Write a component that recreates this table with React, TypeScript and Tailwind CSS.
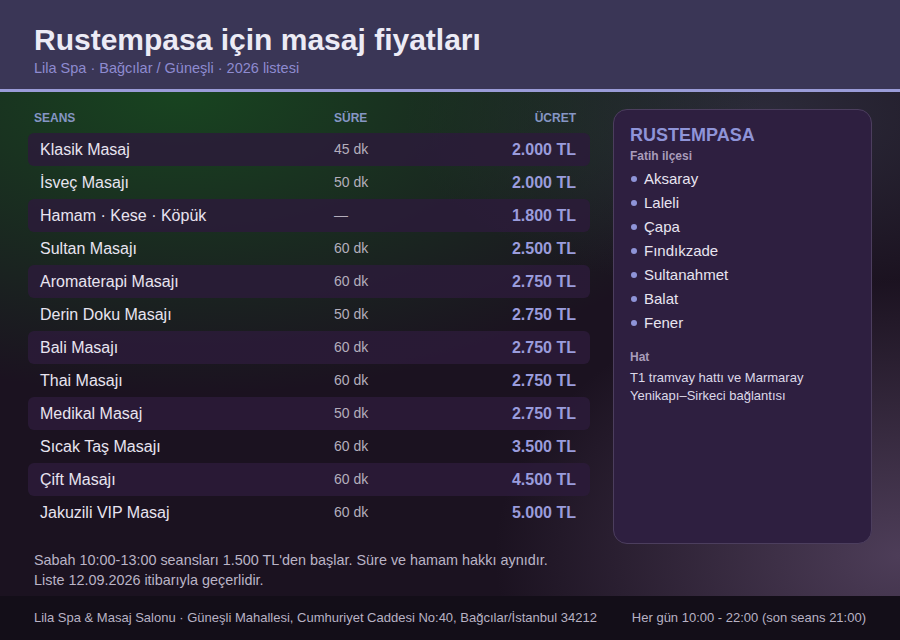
const rows: [string, string, string][] = [
  ["Klasik Masaj", "45 dk", "2.000 TL"],
  ["İsveç Masajı", "50 dk", "2.000 TL"],
  ["Hamam · Kese · Köpük", "—", "1.800 TL"],
  ["Sultan Masajı", "60 dk", "2.500 TL"],
  ["Aromaterapi Masajı", "60 dk", "2.750 TL"],
  ["Derin Doku Masajı", "50 dk", "2.750 TL"],
  ["Bali Masajı", "60 dk", "2.750 TL"],
  ["Thai Masajı", "60 dk", "2.750 TL"],
  ["Medikal Masaj", "50 dk", "2.750 TL"],
  ["Sıcak Taş Masajı", "60 dk", "3.500 TL"],
  ["Çift Masajı", "60 dk", "4.500 TL"],
  ["Jakuzili VIP Masaj", "60 dk", "5.000 TL"],
];

const areas = ["Aksaray", "Laleli", "Çapa", "Fındıkzade", "Sultanahmet", "Balat", "Fener"];

export default function App() {
  return (
    <div className="flex h-[640px] w-[900px] flex-col overflow-hidden bg-[#1b1220] font-['Liberation_Sans',Arial,sans-serif]">
      <header className="h-[89px] bg-[#3a3656] px-[34px] pt-[21px]">
        <h1 className="text-[30px] font-bold leading-[38px] text-[#ecebf5]">Rustempasa için masaj fiyatları</h1>
        <p className="text-[14.5px] leading-[18px] text-[#8e8bd0]">Lila Spa · Bağcılar / Güneşli · 2026 listesi</p>
      </header>
      <div className="h-[3px] bg-[#9a9cd8]" />

      <main className="flex flex-1 gap-[23px] bg-[radial-gradient(ellipse_65%_60%_at_20%_0%,#184420_0%,transparent_100%),radial-gradient(ellipse_45%_55%_at_100%_92%,#4d3d58_0%,transparent_100%),radial-gradient(ellipse_40%_35%_at_85%_5%,#2c2b3a_0%,transparent_100%)] px-7 pt-4">
        <section className="flex w-[562px] flex-col">
          <div className="flex h-5 items-center pl-[6px] pr-[14px] text-[12px] font-bold text-[#8696c4]">
            <span className="w-[300px]">SEANS</span>
            <span className="flex-1">SÜRE</span>
            <span>ÜCRET</span>
          </div>
          <div className="mt-[5px] flex flex-col">
            {rows.map(([name, dur, price], i) => (
              <div
                key={name}
                className={`flex h-[33px] items-center rounded-md pl-3 pr-[14px] ${i % 2 === 0 ? "bg-[#2b1b3a]/85" : ""}`}
              >
                <span className="w-[294px] text-[16px] text-[#e8e4f0]">{name}</span>
                <span className="flex-1 text-[14px] text-[#b4aebc]">{dur}</span>
                <span className="text-[16px] font-bold text-[#9a9cdc]">{price}</span>
              </div>
            ))}
          </div>
          <div className="mt-[21px] pl-[6px] text-[14.4px] leading-5 text-[#bab4c6]">
            <p>Sabah 10:00-13:00 seansları 1.500 TL'den başlar. Süre ve hamam hakkı aynıdır.</p>
            <p>Liste 12.09.2026 itibarıyla geçerlidir.</p>
          </div>
        </section>

        <aside className="mt-px h-[435px] w-[259px] rounded-[14px] border border-[#4c3e5e] bg-[#2e1f40] px-4 pt-[14px]">
          <h2 className="text-[18px] font-bold leading-[22px] text-[#8f94d8]">RUSTEMPASA</h2>
          <p className="mt-[2px] text-[12px] font-bold leading-4 text-[#a99cba]">Fatih ilçesi</p>
          <ul className="mt-[3px] flex flex-col">
            {areas.map((a) => (
              <li key={a} className="flex h-6 items-center gap-[7px] text-[15px] text-[#e8e4f0]">
                <span className="ml-[1px] h-[6px] w-[6px] rounded-full bg-[#8f94d8]" />
                {a}
              </li>
            ))}
          </ul>
          <p className="mt-[14px] text-[12px] font-bold leading-4 text-[#a99cba]">Hat</p>
          <p className="mt-[4px] text-[13px] leading-[18px] text-[#dcd8e8]">
            T1 tramvay hattı ve Marmaray Yenikapı–Sirkeci bağlantısı
          </p>
        </aside>
      </main>

      <footer className="flex h-[44px] items-center justify-between bg-[#130e18] px-[34px] text-[13px] text-[#b8b2c4]">
        <span>Lila Spa &amp; Masaj Salonu · Güneşli Mahallesi, Cumhuriyet Caddesi No:40, Bağcılar/İstanbul 34212</span>
        <span>Her gün 10:00 - 22:00 (son seans 21:00)</span>
      </footer>
    </div>
  );
}
